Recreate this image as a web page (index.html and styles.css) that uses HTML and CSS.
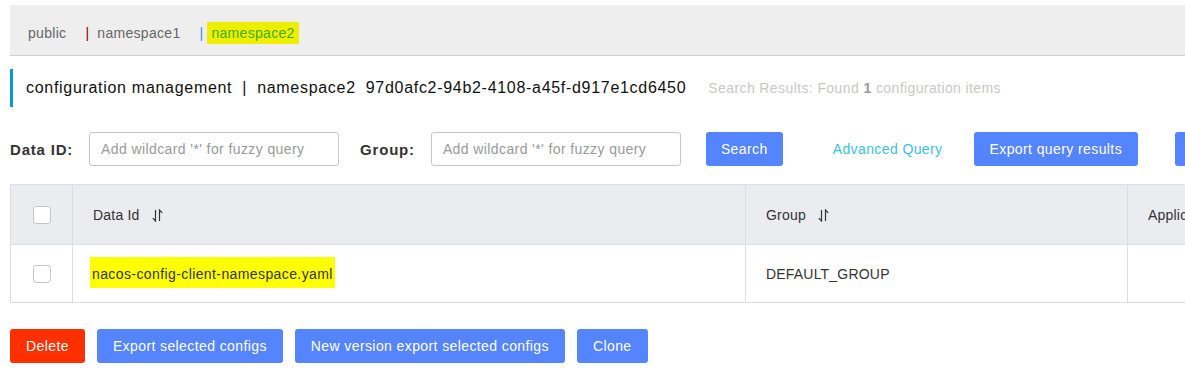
FILE: index.html
```html
<!DOCTYPE html>
<html lang="en">
<head>
    <meta charset="UTF-8">
    <meta name="viewport" content="width=device-width, initial-scale=1.0">
    <title>Configuration management</title>
    <link rel="stylesheet" href="styles.css">
</head>
<body>
<div class="page">

    <!-- namespace tabs -->
    <div class="ns-bar">
        <span class="ns">public</span>
        <span class="sep sep-red">|</span>
        <span class="ns">namespace1</span>
        <span class="sep sep-blue">|</span>
        <span class="ns active">namespace2</span>
    </div>

    <div class="title">
        <span>configuration management</span>
        <span class="title-bar">|</span>
        <span>namespace2</span>
        <span class="ns-id">97d0afc2-94b2-4108-a45f-d917e1cd6450</span>
        <span class="result-info">Search Results: Found <strong>1</strong> configuration items</span>
    </div>

    <div class="filters">
        <label class="filter-label">Data ID:</label>
        <input type="text" class="filter-input" placeholder="Add wildcard '*' for fuzzy query">
        <label class="filter-label group-label">Group:</label>
        <input type="text" class="filter-input" placeholder="Add wildcard '*' for fuzzy query">
        <button class="btn btn-search">Search</button>
        <a class="adv-link">Advanced Query</a>
        <button class="btn btn-export">Export query results</button>
        <button class="btn btn-import">Import configuration</button>
    </div>

    <table class="config-table">
        <colgroup>
            <col class="col-check">
            <col class="col-dataid">
            <col class="col-group">
            <col class="col-app">
        </colgroup>
        <thead>
            <tr>
                <th><span class="checkbox"></span></th>
                <th>Data Id <svg class="sort" width="11" height="13" viewBox="0 0 11 13"><path d="M3.5 1v11L0.8 9.2M7.5 12V1l2.7 2.8" fill="none" stroke="#333" stroke-width="1.2"/></svg></th>
                <th>Group <svg class="sort" width="11" height="13" viewBox="0 0 11 13"><path d="M3.5 1v11L0.8 9.2M7.5 12V1l2.7 2.8" fill="none" stroke="#333" stroke-width="1.2"/></svg></th>
                <th>Application</th>
            </tr>
        </thead>
        <tbody>
            <tr>
                <td><span class="checkbox"></span></td>
                <td><span class="mark">nacos-config-client-namespace.yaml</span></td>
                <td>DEFAULT_GROUP</td>
                <td></td>
            </tr>
        </tbody>
    </table>

    <div class="actions">
        <button class="btn btn-delete">Delete</button>
        <button class="btn">Export selected configs</button>
        <button class="btn">New version export selected configs</button>
        <button class="btn">Clone</button>
    </div>

</div>
</body>
</html>
```

FILE: styles.css
```css
body {
    margin: 0;
    font-family: "Liberation Sans", Arial, sans-serif;
    letter-spacing: 0.4px;
    color: #333;
    background-color: #fff;
    overflow: hidden;
}

.page {
    padding: 5px 0 0 10px;
    overflow: hidden;
}

/* namespace tabs */
.ns-bar {
    display: flex;
    align-items: center;
    height: 45px;
    padding: 5px 0 0 14px;
    background-color: #eeeeee;
    border-bottom: 1px solid #cfcfcf;
    font-size: 14px;
    letter-spacing: 0.3px;
}

.ns {
    padding: 3px 4px;
    line-height: 16px;
    color: #666;
}

.ns.active {
    background-color: #eeee00;
    color: #3fae00;
}

.sep {
    margin: 0 4px 0 15px;
}

.sep-red {
    color: #800000;
}

.sep-blue {
    color: #3d8fd6;
}

/* title */
.title {
    display: flex;
    align-items: center;
    height: 38px;
    margin-top: 13px;
    padding-left: 13px;
    border-left: 3px solid #0a99d8;
    font-size: 16px;
    letter-spacing: 0.7px;
    color: #111;
    white-space: nowrap;
}

.title-bar {
    margin: 0 10px;
}

.ns-id {
    margin-left: 10px;
}

.result-info {
    margin-left: 22px;
    font-size: 14px;
    letter-spacing: 0.4px;
    color: #c8c8c8;
}

.result-info strong {
    color: #999;
}

/* filters */
.filters {
    display: flex;
    align-items: center;
    margin-top: 25px;
    height: 34px;
    white-space: nowrap;
}

.filter-label {
    font-size: 15px;
    font-weight: bold;
    letter-spacing: 0.8px;
    color: #333;
    margin-right: 16px;
}

.group-label {
    margin-left: 21px;
}

.filter-input {
    flex-shrink: 0;
    width: 250px;
    height: 34px;
    box-sizing: border-box;
    padding: 0 11px;
    border: 1px solid #c4c6cf;
    border-radius: 3px;
    font-family: inherit;
    font-size: 14px;
    letter-spacing: inherit;
    color: #333;
    outline: none;
}

.filter-input::placeholder {
    color: #999;
}

.btn {
    flex-shrink: 0;
    height: 34px;
    padding: 0 16px;
    border: none;
    border-radius: 3px;
    background-color: #5584ff;
    color: #fff;
    font-family: inherit;
    font-size: 14px;
    letter-spacing: inherit;
    cursor: pointer;
}

.btn-search {
    margin-left: 25px;
    padding: 0 15px;
}

.adv-link {
    margin-left: 50px;
    font-size: 14px;
    color: #3dbfe3;
    cursor: pointer;
}

.btn-export {
    margin-left: 31px;
}

.btn-import {
    margin-left: 37px;
}

/* table */
.config-table {
    margin-top: 18px;
    width: 1500px;
    table-layout: fixed;
    border-collapse: collapse;
    font-size: 14px;
    letter-spacing: 0.2px;
    color: #333;
}

.col-check { width: 62px; }
.col-dataid { width: 673px; }
.col-group { width: 382px; }
.col-app { width: 383px; }

.config-table th,
.config-table td {
    border: 1px solid #dcdee3;
    padding: 0 20px;
    text-align: left;
    font-weight: normal;
    white-space: nowrap;
}

.config-table th {
    height: 59px;
    background-color: #ebecf0;
}

.config-table td {
    height: 57px;
}

.config-table th:first-child,
.config-table td:first-child {
    padding: 0;
    text-align: center;
}

.checkbox {
    display: inline-block;
    width: 18px;
    height: 18px;
    box-sizing: border-box;
    border: 1px solid #c4c6cf;
    border-radius: 3px;
    background-color: #fff;
    vertical-align: middle;
}

.sort {
    margin-left: 8px;
    vertical-align: -2px;
}

.mark {
    background-color: #ffff00;
    padding: 9px 2px 6px;
    margin-left: -3px;
    letter-spacing: 0.4px;
}

/* bottom actions */
.actions {
    display: flex;
    gap: 12px;
    margin-top: 26px;
}

.btn-delete {
    background-color: #ff3000;
}
```
